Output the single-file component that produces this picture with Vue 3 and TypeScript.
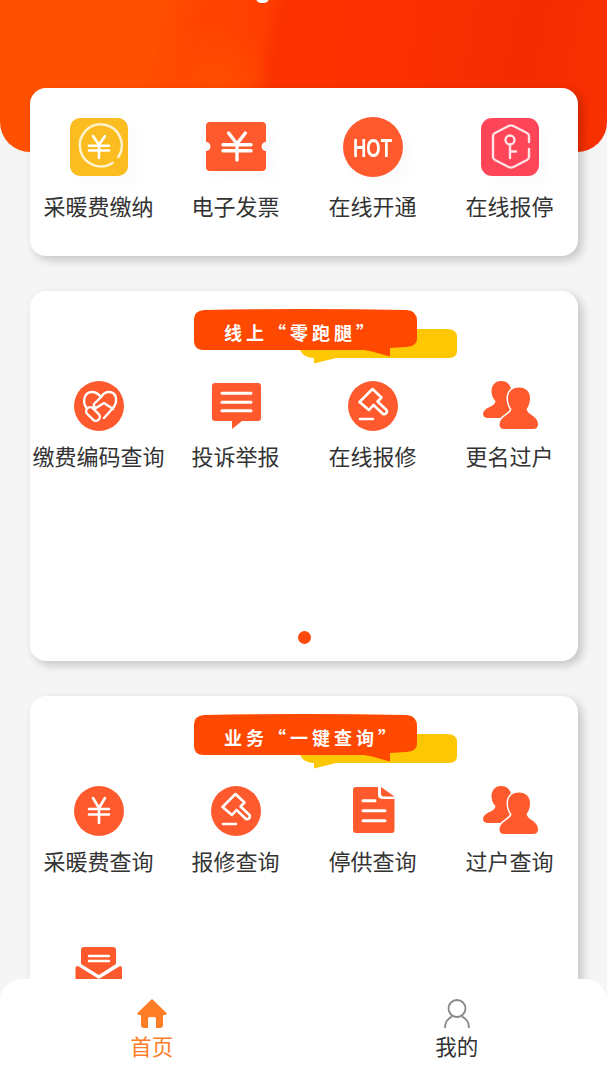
<script setup lang="ts">
interface Entry {
  label: string
  icon: string
}

const orange = '#ff5a2d'

// 人民币符号，几个图标共用
const yen = (x: number, y: number, w: number, h: number, sw: number) => {
  const cx = x + w / 2
  const mid = y + h * 0.4
  const bar2 = y + h * 0.66
  return `<path d="M${cx - w * 0.3} ${y}L${cx} ${mid}L${cx + w * 0.3} ${y}M${x} ${mid + 1}H${x + w}M${x} ${bar2}H${x + w}M${cx} ${mid}V${y + h}" fill="none" stroke="#fff" stroke-width="${sw}" stroke-linecap="round" stroke-linejoin="round"/>`
}

const frontPerson = 'M37 6.5C44 6.5 48 11 48 17C48 22 46.5 25.5 44.5 28C45 31 48 33 51 35C54 37 56 40 56 43.5C56 46.5 54 48 51 48H22C19.5 48 17.5 46.5 17.5 43.5C17.5 40 20 37 23 35C26 33 29 31 29.5 28C27.5 25.5 26 22 26 17C26 11 30 6.5 37 6.5Z'

const gavel = `<circle cx="28" cy="25" r="25" fill="${orange}"/><path d="M14.5 21L27.5 8L36.5 16.5L32.5 20.5L41.5 29Q42.5 30.5 41 32.5Q39 34 37.5 32.5L28.5 24L24 29Z M15 38H28" fill="none" stroke="#fff" stroke-width="2.6" stroke-linejoin="round" stroke-linecap="round"/>`

const people = `<path d="M19 0C25.5 0 29.5 4.5 29 10.5C28.8 14 27 17 26 19L32 30V37H6C3 37 1 35.5 1 33C1 30 3.5 28 6.5 26.5C10 25 13 23.5 13.5 20C11 17.5 9.5 14 9.5 10.5C9.5 4.5 13 0 19 0Z" fill="${orange}"/><path d="${frontPerson}" fill="#fff" stroke="#fff" stroke-width="3"/><path d="${frontPerson}" fill="${orange}"/>`

const icons: Record<string, string> = {
  coin: `<rect x="1" y="1" width="58" height="58" rx="10" fill="#fbbc1f"/><path d="M43.7 45.7A21 21 0 1 1 49.3 40" fill="none" stroke="#fff3cf" stroke-width="2.5" stroke-linecap="round"/>${yen(20, 19, 20, 22, 2.6)}`,
  ticket: `<path d="M4 5H56a4 4 0 0 1 4 4V25a4.5 4.5 0 0 0 0 9V50a4 4 0 0 1-4 4H4a4 4 0 0 1-4-4V34a4.5 4.5 0 0 0 0-9V9a4 4 0 0 1 4-4Z" fill="${orange}"/>${yen(17, 16, 28, 27, 3.4)}`,
  hot: `<circle cx="30" cy="30" r="30" fill="${orange}"/><text transform="translate(10 40) scale(0.71 1)" font-family="Liberation Sans, sans-serif" font-size="26" font-weight="700" fill="#fff">HOT</text>`,
  key: `<rect x="1" y="1" width="58" height="58" rx="11" fill="#ff4558"/><path d="M49 25V19Q49 17 47 16L33 8.8Q31 8 29 8.8L15 16Q13 17 13 19V40Q13 42 15 43L29 50.2Q31 51 33 50.2L47 43Q49 42 49 40V32" fill="none" stroke="#ffe3e6" stroke-width="2.4" stroke-linecap="round"/><circle cx="30" cy="23" r="4.5" fill="none" stroke="#ffe3e6" stroke-width="2.4"/><path d="M30 27.5V41M30 34.5H36" fill="none" stroke="#ffe3e6" stroke-width="2.4" stroke-linecap="round"/>`,
  heart: `<circle cx="28" cy="25" r="25" fill="${orange}"/><g fill="none" stroke="#fff" stroke-width="2.4" stroke-linecap="round" stroke-linejoin="round"><path d="M15.5 27C11 21 13 11 21 11C25 11 27.5 13 30 16C32 13 35 11 38 11C46 11 47 21 42 27L33 37"/><rect x="14" y="29" width="16" height="8" rx="4" transform="rotate(45 22 33)"/><path d="M30 16L23 23Q22 26 25 27L33 22L42 28"/></g>`,
  chat: `<path d="M7 2H50a3 3 0 0 1 3 3V37a3 3 0 0 1-3 3H34L24 48V40H7a3 3 0 0 1-3-3V5a3 3 0 0 1 3-3Z" fill="${orange}"/><path d="M14 12.3H43M14 21.3H43M14 29.7H43" stroke="#fff" stroke-width="3" stroke-linecap="round"/>`,
  gavel,
  people,
  yen: `<circle cx="28" cy="25" r="25" fill="${orange}"/>${yen(18, 12, 20, 25, 2.6)}`,
  doc: `<path d="M11 1H33V9Q33 13 38 13H49.5V44Q49.5 47 46.5 47H11Q8 47 8 44V4Q8 1 11 1ZM36 1L49.5 10.5H39Q36 10.5 36 7Z" fill="${orange}"/><path d="M18 14.7H30M18 24.7H40M18 34.7H40" stroke="#fff" stroke-width="3" stroke-linecap="round"/>`,
  mail: `<path d="M13 0H42Q45 0 45 3V17L27.8 28L10 17V3Q10 0 13 0ZM4.5 21Q4.5 19 7 19L27.8 32L49 19Q51 19 51 21V46H4.5Z" fill="${orange}"/><path d="M18 9H38M18 14H38" stroke="#fff" stroke-width="2.4" stroke-linecap="round"/>`
}

const topEntries: Entry[] = [
  { label: '采暖费缴纳', icon: 'coin' },
  { label: '电子发票', icon: 'ticket' },
  { label: '在线开通', icon: 'hot' },
  { label: '在线报停', icon: 'key' }
]

const onlineEntries: Entry[] = [
  { label: '缴费编码查询', icon: 'heart' },
  { label: '投诉举报', icon: 'chat' },
  { label: '在线报修', icon: 'gavel' },
  { label: '更名过户', icon: 'people' }
]

const queryEntries: Entry[] = [
  { label: '采暖费查询', icon: 'yen' },
  { label: '报修查询', icon: 'gavel' },
  { label: '停供查询', icon: 'doc' },
  { label: '过户查询', icon: 'people' },
  { label: '开票查询', icon: 'mail' }
]
</script>

<template>
  <div class="page">
    <header class="hero">
      <span class="hero-mark"></span>
    </header>

    <main class="content">
      <section class="card card-top">
        <div class="grid">
          <div v-for="item in topEntries" :key="item.label" class="entry">
            <svg class="icon-lg" viewBox="0 0 60 60" width="60" height="60" v-html="icons[item.icon]"></svg>
            <span class="label label-lg">{{ item.label }}</span>
          </div>
        </div>
      </section>

      <section class="card card-panel">
        <div class="banner">
          <svg class="banner-bg" viewBox="0 0 263 55" width="263" height="55">
            <path d="M106 41Q110 49 120 49V54.5L142 49H255Q263 49 263 42V28Q263 20 253 20H110Z" fill="#fdc803" />
            <path d="M10 1Q110 -1 213 1Q223 2 223 12V30Q223 37 212 38L196 39V47.5L176 42L170 41H10Q0 41 0 32V10Q0 2 10 1Z" fill="#ff4800" />
          </svg>
          <span class="banner-text">线上“零跑腿”</span>
        </div>
        <div class="swiper">
          <div class="grid">
            <div v-for="item in onlineEntries" :key="item.label" class="entry">
              <svg class="icon-md" viewBox="0 0 56 50" width="56" height="50" v-html="icons[item.icon]"></svg>
              <span class="label">{{ item.label }}</span>
            </div>
          </div>
        </div>
        <div class="dot"></div>
      </section>

      <section class="card card-panel card-last">
        <div class="banner">
          <svg class="banner-bg" viewBox="0 0 263 55" width="263" height="55">
            <path d="M106 41Q110 49 120 49V54.5L142 49H255Q263 49 263 42V28Q263 20 253 20H110Z" fill="#fdc803" />
            <path d="M10 1Q110 -1 213 1Q223 2 223 12V30Q223 37 212 38L196 39V47.5L176 42L170 41H10Q0 41 0 32V10Q0 2 10 1Z" fill="#ff4800" />
          </svg>
          <span class="banner-text">业务“一键查询”</span>
        </div>
        <div class="grid grid-rows">
          <div v-for="item in queryEntries" :key="item.label" class="entry">
            <svg class="icon-md" viewBox="0 0 56 50" width="56" height="50" v-html="icons[item.icon]"></svg>
            <span class="label">{{ item.label }}</span>
          </div>
        </div>
      </section>
    </main>

    <!-- 底部导航 -->
    <nav class="tabbar">
      <div class="tab tab-active">
        <svg viewBox="0 0 30 29" width="30" height="29">
          <path d="M15 0L29.5 14Q30 16 28 16H26V26Q26 29 23 29H19V20Q19 18 17 18H13Q11 18 11 20V29H7Q4 29 4 26V16H2Q0 16 .5 14Z" fill="#ff7d27" />
        </svg>
        <span>首页</span>
      </div>
      <div class="tab">
        <svg viewBox="0 0 26 29" width="26" height="29">
          <circle cx="13" cy="9.5" r="8.5" fill="none" stroke="#888" stroke-width="1.8" />
          <path d="M1 29C1 23 4 19.5 8 17.5M25 29C25 23 22 19.5 18 17.5" fill="none" stroke="#888" stroke-width="1.8" />
        </svg>
        <span>我的</span>
      </div>
    </nav>
  </div>
</template>

<style>
html,
body {
  background: #f5f5f5;
}
</style>

<style scoped>
.page {
  position: relative;
  height: 1080px;
  overflow: hidden;
  background: #f5f5f5;
  font-family: "Noto Sans CJK SC", "Noto Sans", sans-serif;
  color: #333;
}

.hero {
  position: relative;
  height: 152px;
  border-radius: 0 0 30px 30px;
  background:
    radial-gradient(ellipse 60px 70px at 215px 88px, rgba(255, 80, 0, 0.9), rgba(255, 80, 0, 0) 100%),
    linear-gradient(100deg, #ff5000 0%, #ff5000 25%, #ff4300 32%, #ff3f00 42%, #fb3200 45%, #fb3000 65%, #f32c00 84%, #f93000 100%);
}

.hero-mark {
  position: absolute;
  left: 256px;
  top: -2px;
  width: 13px;
  height: 5px;
  border-radius: 0 0 7px 7px;
  background: #fff;
}

.content {
  display: flex;
  flex-direction: column;
  gap: 35px;
  margin-top: -64px;
  padding: 0 29px 0 30px;
}

.card {
  position: relative;
  background: #fff;
  border-radius: 16px;
  box-shadow: 4px 4px 10px rgba(0, 0, 0, 0.2);
}

.card-top {
  padding: 29px 0 36px;
}

.card-panel {
  padding-top: 18px;
}

.card-last {
  padding-bottom: 60px;
}

.grid {
  display: grid;
  grid-template-columns: repeat(4, 1fr);
}

.grid-rows {
  row-gap: 72px;
}

.entry {
  display: flex;
  flex-direction: column;
  align-items: center;
}

.icon-lg {
  display: block;
  filter: drop-shadow(8px 8px 6px rgba(0, 0, 0, 0.02));
}

.icon-md {
  display: block;
}

.label {
  margin-top: 9px;
  font-size: 22px;
  line-height: 30px;
  white-space: nowrap;
}

.label-lg {
  margin-top: 13px;
}

.banner {
  display: grid;
  width: 263px;
  height: 55px;
  margin: 0 0 17px 164px;
}

.banner-bg,
.banner-text {
  grid-area: 1 / 1;
}

.banner-bg {
  display: block;
}

.banner-text {
  padding-left: 30px;
  font-size: 18px;
  line-height: 46px;
  font-weight: 700;
  letter-spacing: 4px;
  color: #fff;
  white-space: nowrap;
}

.swiper {
  height: 250px;
}

.dot {
  width: 13px;
  height: 13px;
  margin: 0 auto 17px;
  border-radius: 50%;
  background: #ff4a0d;
}

.tabbar {
  position: absolute;
  left: 0;
  right: 0;
  bottom: 0;
  height: 101px;
  display: grid;
  grid-template-columns: 1fr 1fr;
  padding-top: 20px;
  box-sizing: border-box;
  background: #fff;
  border-radius: 22px 22px 0 0;
}

.tab {
  display: flex;
  flex-direction: column;
  align-items: center;
  font-size: 21.5px;
  line-height: 30px;
  color: #333;
}

.tab + .tab {
  padding-left: 3px;
}

.tab svg {
  display: block;
  margin-bottom: 3px;
}

.tab-active {
  color: #ff7d27;
}
</style>
